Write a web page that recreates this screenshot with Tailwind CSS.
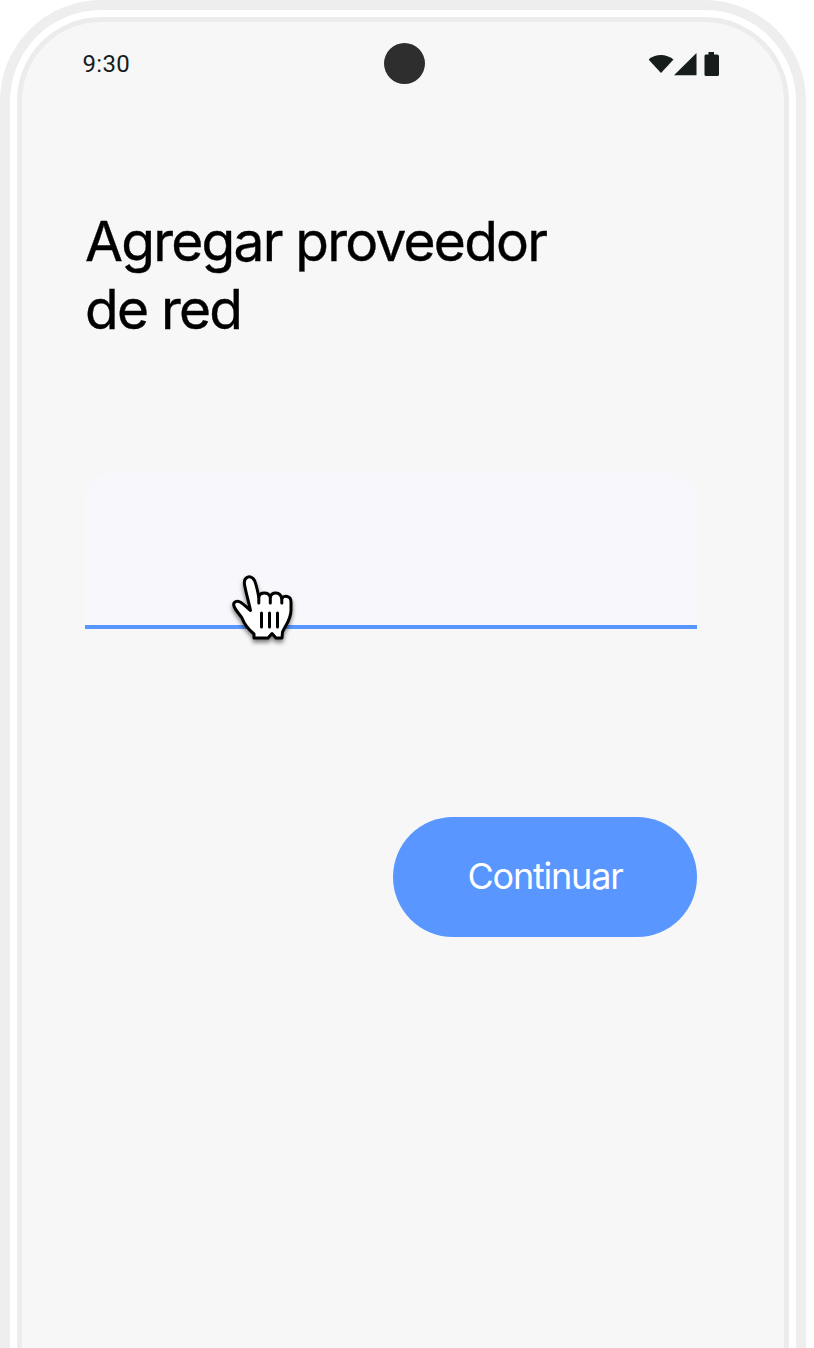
<!DOCTYPE html>
<html lang="es">
<head>
<meta charset="utf-8">
<title>Agregar proveedor de red</title>
<script src="https://cdn.jsdelivr.net/npm/@tailwindcss/browser@4"></script>
</head>
<body class="bg-white h-[1348px] overflow-hidden">
<div class="w-[806px] h-[1348px] rounded-t-[101px] border-[10px] border-b-0 border-[#eeeeee] bg-white pt-[7px] px-[7px]">
  <main class="relative h-full rounded-t-[84px] border-[5px] border-b-0 border-[#ececec] bg-[#f7f7f7] font-['Inter',sans-serif]">
    <header class="grid grid-cols-3 items-center h-[84px] pl-[60.5px] pr-[64px]">
      <span class="font-['Roboto',sans-serif] text-2xl text-[#171d1b] tracking-[0.3px]">9:30</span>
      <span class="size-[41px] rounded-full bg-[#2e2e2e] justify-self-center ml-[5.5px] mb-px"></span>
      <svg class="justify-self-end" width="71" height="26" viewBox="0 0 71 26" fill="#171d1b">
        <path d="M-.5 8.500C7 2.500 17 2.500 24.500 8.500L12 22Z"/>
        <path d="M25 24.300 47.500 2V24.300Z"/>
        <path d="M56.500 3.500h3V1h5.500v2.500h3Q70 3.500 70 5.500V23.500Q70 25 68.500 25H57Q55.500 25 55.500 23.500V5.500Q55.500 3.500 56.500 3.500Z"/>
      </svg>
    </header>
    <section class="flex flex-col pl-[63px] pr-[87px] pt-[101px]">
      <h1 class="text-[55px] leading-[68px] tracking-[-1.75px] [-webkit-text-stroke:0.4px_#000] text-black whitespace-nowrap">Agregar proveedor<br>de red</h1>
      <div class="mt-[129px] h-[157px] w-[612px] rounded-t-[28px] bg-[#f7f7fc] flex flex-col justify-end">
        <div class="h-1 bg-[#5996ff]"></div>
      </div>
      <button class="mt-[188px] self-end w-[304px] h-[120px] rounded-full bg-[#5996ff] text-white text-[36px] tracking-[-1.2px] pb-0.5">Continuar</button>
    </section>
    <svg class="absolute left-[193px] top-[538px] drop-shadow-[0_3px_2px_rgba(0,0,0,0.5)]" width="100" height="100" viewBox="0 0 100 100" stroke="#000" stroke-width="3" stroke-linejoin="round" stroke-linecap="round" fill="#fff">
      <path d="M35.500 50.500C34 43 31.500 35 29.800 26C27.500 15.500 36.500 14.500 39.500 20.500C41.500 25 42.500 31 43.800 37C45 31.500 53.500 31.500 55.300 37C57 31.500 65 31.500 66.800 38.500C69 35 76 35.500 76 42V50C76 60 70 66 67.500 72L67 78H61L57 73.500L53 78H39V74C33 69 29.500 65 27 58C24.500 54 20 50 18.800 45.500C18 41.500 22.500 40 26 42.500C30 45 32 48 35.500 50.500Z"/>
      <path d="M43.800 37V43M55.300 37V43M66.800 38V43M46.500 53V67M54.500 53V67M62.500 53V67" fill="none"/>
    </svg>
  </main>
</div>
</body>
</html>
